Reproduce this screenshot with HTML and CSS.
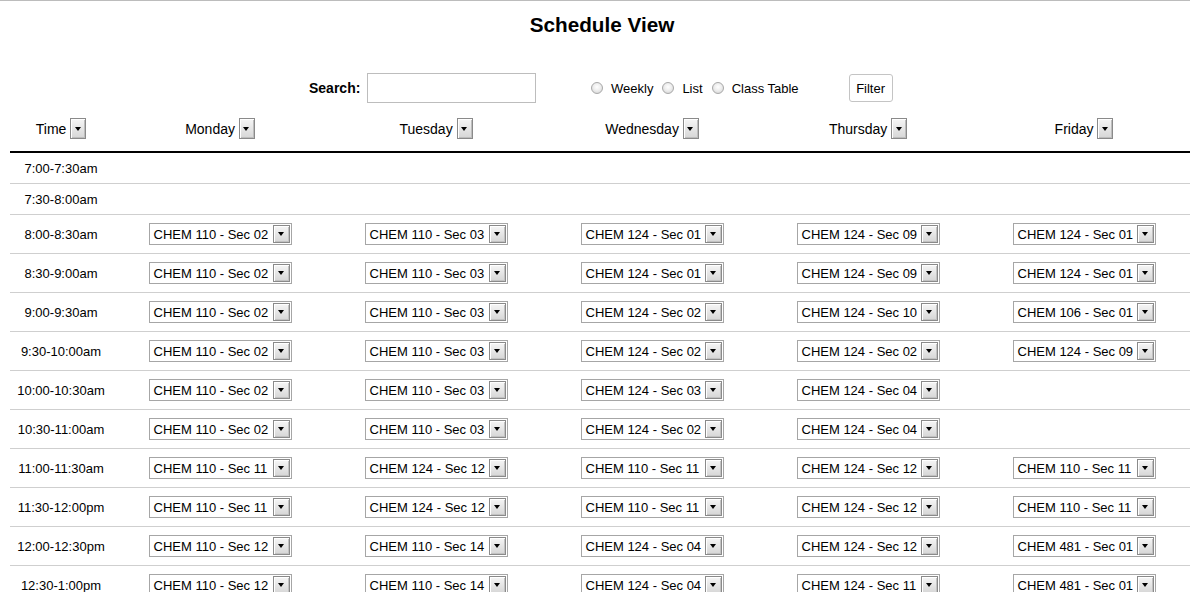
FILE: index.html
```html
<!DOCTYPE html>
<html>
<head>
<meta charset="utf-8">
<title>Schedule View</title>
<link rel="stylesheet" href="styles.css">
</head>
<body>
<div class="page">
  <h1 class="title">Schedule View</h1>
  <div class="toolbar">
    <label class="search-label" for="q">Search:</label>
    <input class="search-input" id="q" type="text">
    <div class="views">
      <label class="opt"><input type="radio" name="v" class="radio"><span>Weekly</span></label>
      <label class="opt"><input type="radio" name="v" class="radio"><span>List</span></label>
      <label class="opt"><input type="radio" name="v" class="radio"><span>Class Table</span></label>
    </div>
    <button class="filter">Filter</button>
  </div>
  <table class="sched">
    <colgroup>
      <col class="c-time"><col class="c-day"><col class="c-day"><col class="c-day"><col class="c-day"><col class="c-day">
    </colgroup>
    <thead>
      <tr>
        <th><span class="hd">Time <span class="dd"></span></span></th>
        <th><span class="hd">Monday <span class="dd"></span></span></th>
        <th><span class="hd">Tuesday <span class="dd"></span></span></th>
        <th><span class="hd">Wednesday <span class="dd"></span></span></th>
        <th><span class="hd">Thursday <span class="dd"></span></span></th>
        <th><span class="hd">Friday <span class="dd"></span></span></th>
      </tr>
    </thead>
    <tbody id="rows">
      <tr class="empty"><td><div class="cell">7:00-7:30am</div></td><td></td><td></td><td></td><td></td><td></td></tr>
      <tr class="empty"><td><div class="cell">7:30-8:00am</div></td><td></td><td></td><td></td><td></td><td></td></tr>
      <tr><td><div class="cell">8:00-8:30am</div></td>
        <td><div class="cell"><span class="sel"><span class="sel-t">CHEM 110 - Sec 02</span><span class="sel-b"></span></span></div></td>
        <td><div class="cell"><span class="sel"><span class="sel-t">CHEM 110 - Sec 03</span><span class="sel-b"></span></span></div></td>
        <td><div class="cell"><span class="sel"><span class="sel-t">CHEM 124 - Sec 01</span><span class="sel-b"></span></span></div></td>
        <td><div class="cell"><span class="sel"><span class="sel-t">CHEM 124 - Sec 09</span><span class="sel-b"></span></span></div></td>
        <td><div class="cell"><span class="sel"><span class="sel-t">CHEM 124 - Sec 01</span><span class="sel-b"></span></span></div></td></tr>
      <tr><td><div class="cell">8:30-9:00am</div></td>
        <td><div class="cell"><span class="sel"><span class="sel-t">CHEM 110 - Sec 02</span><span class="sel-b"></span></span></div></td>
        <td><div class="cell"><span class="sel"><span class="sel-t">CHEM 110 - Sec 03</span><span class="sel-b"></span></span></div></td>
        <td><div class="cell"><span class="sel"><span class="sel-t">CHEM 124 - Sec 01</span><span class="sel-b"></span></span></div></td>
        <td><div class="cell"><span class="sel"><span class="sel-t">CHEM 124 - Sec 09</span><span class="sel-b"></span></span></div></td>
        <td><div class="cell"><span class="sel"><span class="sel-t">CHEM 124 - Sec 01</span><span class="sel-b"></span></span></div></td></tr>
      <tr><td><div class="cell">9:00-9:30am</div></td>
        <td><div class="cell"><span class="sel"><span class="sel-t">CHEM 110 - Sec 02</span><span class="sel-b"></span></span></div></td>
        <td><div class="cell"><span class="sel"><span class="sel-t">CHEM 110 - Sec 03</span><span class="sel-b"></span></span></div></td>
        <td><div class="cell"><span class="sel"><span class="sel-t">CHEM 124 - Sec 02</span><span class="sel-b"></span></span></div></td>
        <td><div class="cell"><span class="sel"><span class="sel-t">CHEM 124 - Sec 10</span><span class="sel-b"></span></span></div></td>
        <td><div class="cell"><span class="sel"><span class="sel-t">CHEM 106 - Sec 01</span><span class="sel-b"></span></span></div></td></tr>
      <tr><td><div class="cell">9:30-10:00am</div></td>
        <td><div class="cell"><span class="sel"><span class="sel-t">CHEM 110 - Sec 02</span><span class="sel-b"></span></span></div></td>
        <td><div class="cell"><span class="sel"><span class="sel-t">CHEM 110 - Sec 03</span><span class="sel-b"></span></span></div></td>
        <td><div class="cell"><span class="sel"><span class="sel-t">CHEM 124 - Sec 02</span><span class="sel-b"></span></span></div></td>
        <td><div class="cell"><span class="sel"><span class="sel-t">CHEM 124 - Sec 02</span><span class="sel-b"></span></span></div></td>
        <td><div class="cell"><span class="sel"><span class="sel-t">CHEM 124 - Sec 09</span><span class="sel-b"></span></span></div></td></tr>
      <tr><td><div class="cell">10:00-10:30am</div></td>
        <td><div class="cell"><span class="sel"><span class="sel-t">CHEM 110 - Sec 02</span><span class="sel-b"></span></span></div></td>
        <td><div class="cell"><span class="sel"><span class="sel-t">CHEM 110 - Sec 03</span><span class="sel-b"></span></span></div></td>
        <td><div class="cell"><span class="sel"><span class="sel-t">CHEM 124 - Sec 03</span><span class="sel-b"></span></span></div></td>
        <td><div class="cell"><span class="sel"><span class="sel-t">CHEM 124 - Sec 04</span><span class="sel-b"></span></span></div></td>
        <td><div class="cell"></div></td></tr>
      <tr><td><div class="cell">10:30-11:00am</div></td>
        <td><div class="cell"><span class="sel"><span class="sel-t">CHEM 110 - Sec 02</span><span class="sel-b"></span></span></div></td>
        <td><div class="cell"><span class="sel"><span class="sel-t">CHEM 110 - Sec 03</span><span class="sel-b"></span></span></div></td>
        <td><div class="cell"><span class="sel"><span class="sel-t">CHEM 124 - Sec 02</span><span class="sel-b"></span></span></div></td>
        <td><div class="cell"><span class="sel"><span class="sel-t">CHEM 124 - Sec 04</span><span class="sel-b"></span></span></div></td>
        <td><div class="cell"></div></td></tr>
      <tr><td><div class="cell">11:00-11:30am</div></td>
        <td><div class="cell"><span class="sel"><span class="sel-t">CHEM 110 - Sec 11</span><span class="sel-b"></span></span></div></td>
        <td><div class="cell"><span class="sel"><span class="sel-t">CHEM 124 - Sec 12</span><span class="sel-b"></span></span></div></td>
        <td><div class="cell"><span class="sel"><span class="sel-t">CHEM 110 - Sec 11</span><span class="sel-b"></span></span></div></td>
        <td><div class="cell"><span class="sel"><span class="sel-t">CHEM 124 - Sec 12</span><span class="sel-b"></span></span></div></td>
        <td><div class="cell"><span class="sel"><span class="sel-t">CHEM 110 - Sec 11</span><span class="sel-b"></span></span></div></td></tr>
      <tr><td><div class="cell">11:30-12:00pm</div></td>
        <td><div class="cell"><span class="sel"><span class="sel-t">CHEM 110 - Sec 11</span><span class="sel-b"></span></span></div></td>
        <td><div class="cell"><span class="sel"><span class="sel-t">CHEM 124 - Sec 12</span><span class="sel-b"></span></span></div></td>
        <td><div class="cell"><span class="sel"><span class="sel-t">CHEM 110 - Sec 11</span><span class="sel-b"></span></span></div></td>
        <td><div class="cell"><span class="sel"><span class="sel-t">CHEM 124 - Sec 12</span><span class="sel-b"></span></span></div></td>
        <td><div class="cell"><span class="sel"><span class="sel-t">CHEM 110 - Sec 11</span><span class="sel-b"></span></span></div></td></tr>
      <tr><td><div class="cell">12:00-12:30pm</div></td>
        <td><div class="cell"><span class="sel"><span class="sel-t">CHEM 110 - Sec 12</span><span class="sel-b"></span></span></div></td>
        <td><div class="cell"><span class="sel"><span class="sel-t">CHEM 110 - Sec 14</span><span class="sel-b"></span></span></div></td>
        <td><div class="cell"><span class="sel"><span class="sel-t">CHEM 124 - Sec 04</span><span class="sel-b"></span></span></div></td>
        <td><div class="cell"><span class="sel"><span class="sel-t">CHEM 124 - Sec 12</span><span class="sel-b"></span></span></div></td>
        <td><div class="cell"><span class="sel"><span class="sel-t">CHEM 481 - Sec 01</span><span class="sel-b"></span></span></div></td></tr>
      <tr><td><div class="cell">12:30-1:00pm</div></td>
        <td><div class="cell"><span class="sel"><span class="sel-t">CHEM 110 - Sec 12</span><span class="sel-b"></span></span></div></td>
        <td><div class="cell"><span class="sel"><span class="sel-t">CHEM 110 - Sec 14</span><span class="sel-b"></span></span></div></td>
        <td><div class="cell"><span class="sel"><span class="sel-t">CHEM 124 - Sec 04</span><span class="sel-b"></span></span></div></td>
        <td><div class="cell"><span class="sel"><span class="sel-t">CHEM 124 - Sec 11</span><span class="sel-b"></span></span></div></td>
        <td><div class="cell"><span class="sel"><span class="sel-t">CHEM 481 - Sec 01</span><span class="sel-b"></span></span></div></td></tr>
    </tbody>
  </table>
</div>
</body>
</html>
```

FILE: styles.css
```css
html {
  overflow: hidden;
  background: #fff;
}
body {
  margin: 0;
  border-top: 1px solid #bcbcbc;
  font-family: "Liberation Sans", Arial, sans-serif;
  color: #000;
}
.page {
  width: 1184px;
  margin-left: 10px;
}
.title {
  margin: 12px 0 0;
  font-size: 20.7px;
  line-height: 24px;
  font-weight: bold;
  text-align: center;
}
.toolbar {
  margin-top: 36px;
  height: 30px;
  display: flex;
  align-items: center;
  padding-left: 299px;
  font-size: 13px;
}
.search-label {
  font-size: 14px;
  font-weight: bold;
  width: 51px;
  margin-right: 7px;
}
.search-input {
  box-sizing: border-box;
  width: 169px;
  height: 30px;
  margin: 0;
  border: 1px solid #bdbdbd;
  padding: 0 4px;
  font: inherit;
}
.views {
  display: flex;
  align-items: center;
  margin-left: 55px;
}
.opt {
  display: flex;
  align-items: center;
  margin-right: 9px;
}
.opt:last-child {
  margin-right: 0;
}
.radio {
  -webkit-appearance: none;
  appearance: none;
  width: 12px;
  height: 12px;
  margin: 0 8px 0 0;
  border-radius: 50%;
  border: 1px solid #a8a8a8;
  background: radial-gradient(circle at 50% 40%, #ffffff 0%, #eeeeee 45%, #cfcfcf 100%);
  box-sizing: border-box;
}
.filter {
  margin-left: 50px;
  box-sizing: border-box;
  width: 44px;
  height: 28px;
  border: 1px solid #c4c4c4;
  border-radius: 3px;
  background: #fff;
  font-family: inherit;
  font-size: 13px;
  color: #000;
  padding: 0;
}
.sched {
  table-layout: fixed;
  width: 1182px;
  border-collapse: collapse;
  border-spacing: 0;
}
.c-time {
  width: 102px;
}
.c-day {
  width: 216px;
}
.sched th {
  padding: 15px 0 12px;
  border-bottom: 2px solid #000;
  font-weight: normal;
  font-size: 14px;
  text-align: center;
}
.hd {
  display: inline-flex;
  align-items: center;
  height: 21px;
  white-space: pre;
}
.dd {
  box-sizing: border-box;
  width: 16px;
  height: 21px;
  border: 1px solid #8a8a8a;
  box-shadow: inset 1px 1px 0 #fff, inset -1px -1px 0 #bdbdbd;
  background: linear-gradient(#f6f6f6, #d6d6d6);
  position: relative;
}
.dd::after,
.sel-b::after {
  content: "";
  position: absolute;
  left: 50%;
  top: 50%;
  margin-left: -3.5px;
  margin-top: -2px;
  border-left: 3.5px solid transparent;
  border-right: 3.5px solid transparent;
  border-top: 4px solid #000;
}
.sched td {
  padding: 0;
  border-bottom: 1px solid #cfcfcf;
  font-size: 13px;
}
.cell {
  height: 38px;
  display: flex;
  align-items: center;
  justify-content: center;
}
.empty .cell {
  height: 30px;
}
.sel {
  box-sizing: border-box;
  width: 143px;
  height: 22px;
  border: 1px solid #a6a6a6;
  background: #fff;
  display: flex;
  align-items: center;
  padding: 1px;
}
.sel-t {
  flex: 1;
  padding-left: 3px;
  white-space: nowrap;
}
.sel-b {
  box-sizing: border-box;
  width: 17px;
  height: 18px;
  border: 1px solid #8a8a8a;
  box-shadow: inset 1px 1px 0 #fff, inset -1px -1px 0 #c2c2c2;
  background: linear-gradient(#f6f6f6, #d6d6d6);
  position: relative;
}
```
